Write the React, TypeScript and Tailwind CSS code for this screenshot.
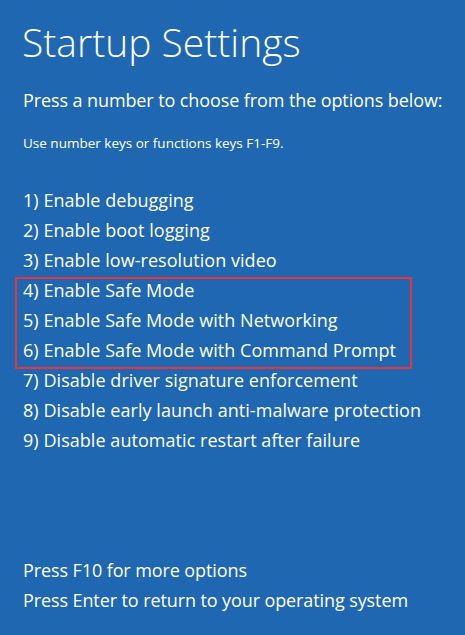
const options = [
  "1) Enable debugging",
  "2) Enable boot logging",
  "3) Enable low-resolution video",
  "7) Disable driver signature enforcement",
  "8) Disable early launch anti-malware protection",
  "9) Disable automatic restart after failure",
];

const safeModes = [
  "4) Enable Safe Mode",
  "5) Enable Safe Mode with Networking",
  "6) Enable Safe Mode with Command Prompt",
];

export default function App() {
  return (
    <main
      className="h-[635px] w-[465px] overflow-hidden bg-[#2067b2] pl-[23px] text-white"
      style={{ fontFamily: '"Open Sans", "Noto Sans", sans-serif' }}
    >
      <h1 className="-ml-[1px] pt-[18px] text-[39px] font-light leading-[48px]">Startup Settings</h1>
      <p className="mt-[19px] text-[18px] leading-[30px] tracking-[-0.1px]">
        Press a number to choose from the options below:
      </p>
      <p className="mt-[18px] text-[13.5px] leading-[20px]">Use number keys or functions keys F1-F9.</p>

      <ul className="mt-[32px] text-[18px] leading-[30px] tracking-[0.05px]">
        {options.slice(0, 3).map((item) => (
          <li key={item}>{item}</li>
        ))}
        <li className="relative">
          {safeModes.map((item) => (
            <div key={item}>{item}</div>
          ))}
          <span className="pointer-events-none absolute -bottom-[4px] -left-[8px] top-[2px] w-[397px] border-2 border-[#e8353b]" />
        </li>
        {options.slice(3).map((item) => (
          <li key={item}>{item}</li>
        ))}
      </ul>

      <div className="mt-[100px] text-[18px] leading-[30px] tracking-[-0.1px]">
        <p>Press F10 for more options</p>
        <p>Press Enter to return to your operating system</p>
      </div>
    </main>
  );
}
